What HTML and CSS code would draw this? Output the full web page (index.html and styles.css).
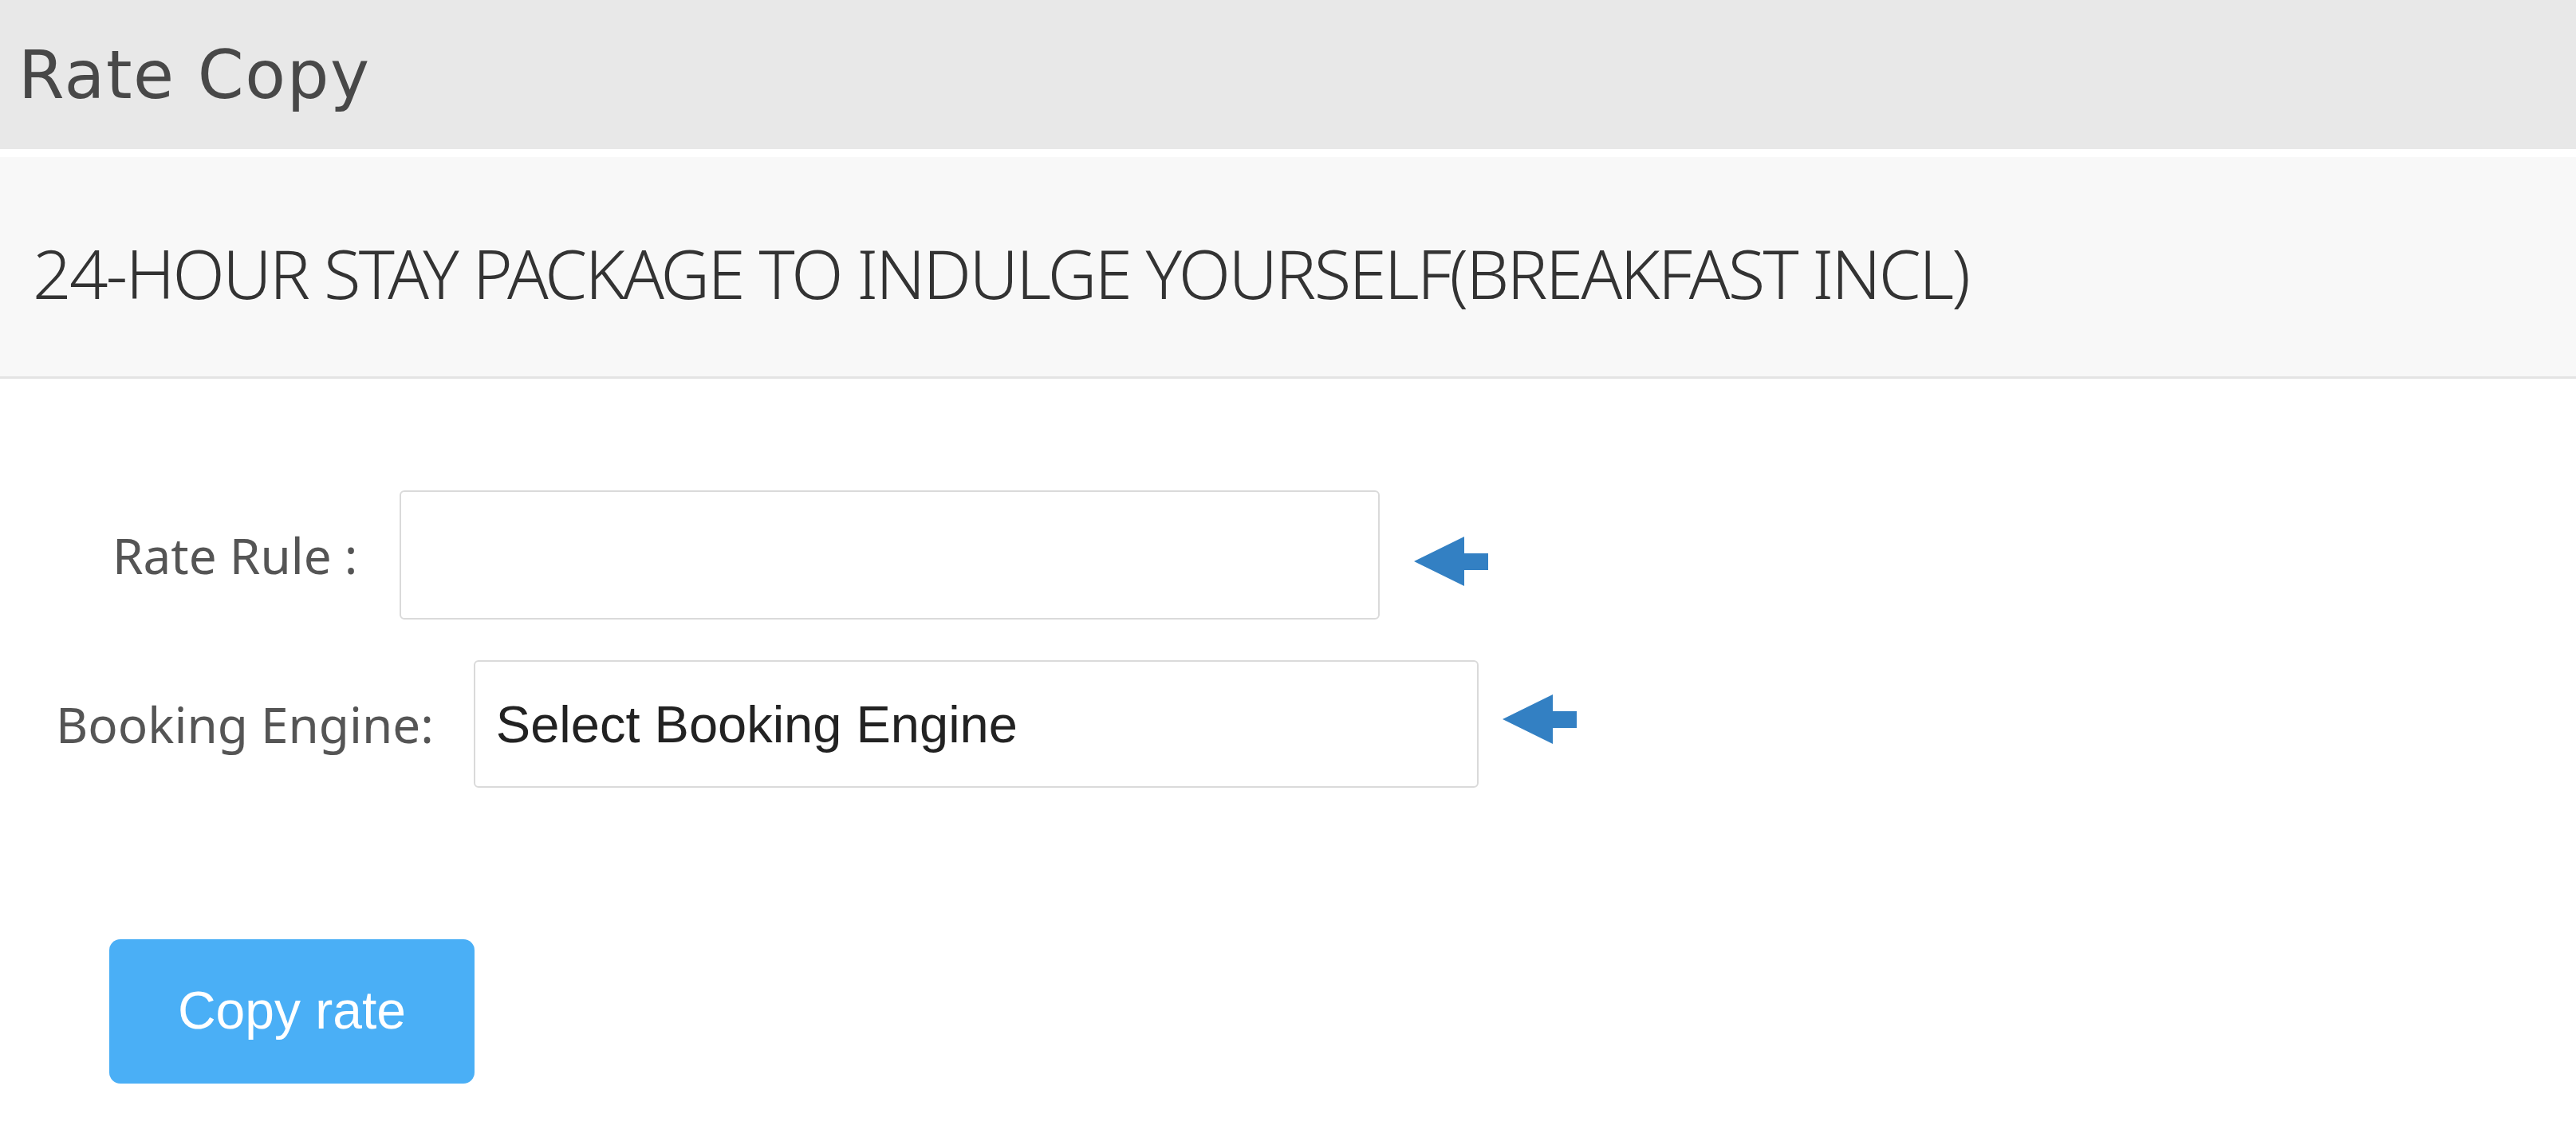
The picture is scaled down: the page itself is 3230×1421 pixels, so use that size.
FILE: index.html
```html
<!DOCTYPE html>
<html lang="en">
<head>
<meta charset="utf-8">
<title>Rate Copy</title>
<link rel="stylesheet" href="styles.css">
</head>
<body>
<header class="page-header">
  <h1 class="page-title">Rate Copy</h1>
</header>
<section class="package-panel">
  <h2 class="package-title">24-HOUR STAY PACKAGE TO INDULGE YOURSELF(BREAKFAST INCL)</h2>
</section>
<form class="rate-form">
  <div class="form-row row-rule">
    <label class="form-label" for="rate-rule">Rate Rule :</label>
    <input class="form-input input-rule" id="rate-rule" type="text">
    <svg class="hint-arrow arrow-rule" viewBox="0 0 93 62" width="93" height="62" aria-hidden="true"><polygon points="0,31 63,0 63,21 93,21 93,42 63,42 63,62" fill="#3380c3"/></svg>
  </div>
  <div class="form-row row-engine">
    <label class="form-label" for="engine">Booking Engine:</label>
    <select class="form-input input-engine" id="engine">
      <option>Select Booking Engine</option>
    </select>
    <svg class="hint-arrow arrow-engine" viewBox="0 0 93 62" width="93" height="62" aria-hidden="true"><polygon points="0,31 63,0 63,21 93,21 93,42 63,42 63,62" fill="#3380c3"/></svg>
  </div>
  <div class="form-actions">
    <button class="copy-btn" type="button">Copy rate</button>
  </div>
</form>
</body>
</html>
```

FILE: styles.css
```css
html, body {
  margin: 0;
  padding: 0;
  background: #ffffff;
}

body {
  width: 3230px;
  font-family: "Noto Sans", "Open Sans", sans-serif;
}

.page-header {
  height: 187px;
  box-sizing: border-box;
  background: #e8e8e8;
  padding: 52px 0 0 23px;
  margin-bottom: 10px;
}

.page-title {
  margin: 0;
  font-family: "DejaVu Sans", "Lato", sans-serif;
  font-weight: 400;
  font-size: 83px;
  line-height: 85px;
  letter-spacing: 1.6px;
  color: #484848;
}

.package-panel {
  background: #f8f8f8;
  border-bottom: 3px solid #e4e4e4;
  padding: 102px 0 87px 41px;
}

.package-title {
  margin: 0;
  font-family: "Noto Sans", "Open Sans", sans-serif;
  font-weight: 300;
  font-size: 85px;
  line-height: 86px;
  letter-spacing: -2.6px;
  color: #333333;
  white-space: nowrap;
}

.rate-form {
  padding-top: 140px;
}

.form-row {
  display: flex;
  align-items: center;
}

.row-rule {
  padding-left: 141px;
  height: 162px;
}

.row-engine {
  padding-left: 70px;
  height: 160px;
  margin-top: 51px;
}

.form-label {
  font-family: "Noto Sans", "Open Sans", sans-serif;
  font-weight: 400;
  font-size: 62px;
  color: #555555;
  white-space: nowrap;
}

.row-rule .form-label {
  margin-right: 53px;
}

.row-engine .form-label {
  margin-right: 50px;
}

.form-input {
  box-sizing: border-box;
  border: 2px solid #dadada;
  border-radius: 6px;
  background: #ffffff;
  margin: 0;
}

.input-rule {
  width: 1229px;
  height: 162px;
}

.input-engine {
  width: 1260px;
  height: 160px;
  -webkit-appearance: none;
  appearance: none;
  padding: 0 0 0 26px;
  font-family: "Liberation Sans", Arial, sans-serif;
  font-size: 65px;
  color: #222222;
}

.hint-arrow {
  display: block;
  flex: none;
}

.arrow-rule {
  margin-left: 43px;
  margin-top: 16px;
}

.arrow-engine {
  margin-left: 30px;
  margin-top: -12px;
}

.form-actions {
  padding-left: 137px;
  margin-top: 190px;
}

.copy-btn {
  display: block;
  width: 458px;
  height: 181px;
  border: none;
  border-radius: 14px;
  background: #4aaff6;
  color: #ffffff;
  font-family: "Liberation Sans", Arial, sans-serif;
  font-size: 66px;
  padding: 0 0 4px;
  cursor: pointer;
}
```
